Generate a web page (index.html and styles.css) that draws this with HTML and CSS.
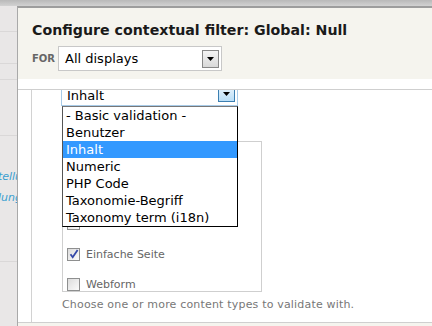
FILE: index.html
```html
<!DOCTYPE html>
<html lang="de">
<head>
    <meta charset="UTF-8">
    <title>Configure contextual filter</title>
    <link rel="stylesheet" href="styles.css">
</head>
<body>
    <div class="topbar"></div>
    <div class="layout">
        <!-- Seite hinter dem Overlay -->
        <aside class="backdrop">
            <div class="bg-row h24"></div>
            <div class="bg-row h32"></div>
            <div class="bg-row h16"></div>
            <div class="bg-row h56"></div>
            <div class="bg-spacer"></div>
            <div class="bg-link first"><span>Vorstellung</span></div>
            <div class="bg-link second"><span>Darstellung</span></div>
            <div class="bg-row h56 last"></div>
        </aside>

        <div class="modal">
            <div class="modal-header">
                <h1>Configure contextual filter: Global: Null</h1>
                <div class="for-row">
                    <span class="for-label">For</span>
                    <div class="select">
                        <span>All displays</span>
                        <span class="arrow"><svg width="7" height="4" viewBox="0 0 7 4"><path d="M0 0h7L3.5 4z" fill="#000"/></svg></span>
                    </div>
                </div>
            </div>
            <div class="modal-gap"></div>
            <div class="modal-body">
                <div class="gutter"></div>
                <div class="main">
                    <div class="select focused">
                        <span>Inhalt</span>
                        <span class="arrow"><svg width="7" height="4" viewBox="0 0 7 4"><path d="M0 0h7L3.5 4z" fill="#000"/></svg></span>
                    </div>

                    <div class="types">
                        <div class="check"><span class="box"></span></div>
                        <div class="check"><span class="box"></span></div>
                        <div class="check"><span class="box"></span><span class="hidden-label">Seite</span></div>
                        <label class="check"><span class="box checked"><svg width="10" height="10" viewBox="0 0 10 10"><path d="M1.5 5.2l2.2 3L8.6 1" fill="none" stroke="#3448a8" stroke-width="1.8"/></svg></span>Einfache Seite</label>
                        <label class="check"><span class="box"></span>Webform</label>
                    </div>
                    <p class="description">Choose one or more content types to validate with.</p>

                    <!-- geöffnete Auswahlliste -->
                    <ul class="options">
                        <li>- Basic validation -</li>
                        <li>Benutzer</li>
                        <li class="selected">Inhalt</li>
                        <li>Numeric</li>
                        <li>PHP Code</li>
                        <li>Taxonomie-Begriff</li>
                        <li>Taxonomy term (i18n)</li>
                    </ul>
                </div>
            </div>
            <div class="modal-footer"></div>
        </div>
    </div>
</body>
</html>
```

FILE: styles.css
```css
body {
    margin: 0;
    height: 326px;
    overflow: hidden;
    font-family: "DejaVu Sans", Verdana, sans-serif;
    background-color: #e8e6e6;
}
.topbar {
    height: 6px;
    background: linear-gradient(#b9b9b9, #d2d2d2);
}
.layout {
    display: flex;
    height: 320px;
}
.backdrop {
    width: 17px;
    flex-shrink: 0;
    background-color: #e9e7e7;
}
.bg-row {
    border-bottom: 1px solid #dad8d8;
}
.bg-row.h24 { height: 25px; }
.bg-row.h32 { height: 31px; }
.bg-row.h16 { height: 15px; }
.bg-row.h56 { height: 55px; }
.bg-row.last { height: 53px; }
.bg-spacer {
    height: 30px;
}
.bg-link {
    height: 21px;
    display: flex;
    justify-content: flex-end;
    align-items: center;
    overflow: hidden;
    font-size: 11px;
    font-style: italic;
    color: #3a9fd0;
}
.bg-link span {
    white-space: nowrap;
}
.bg-link.first span {
    margin-right: -19px;
}
.bg-link.second span {
    margin-right: -5px;
}
.modal {
    flex: 1;
    display: flex;
    flex-direction: column;
    border-top: 2px solid #9d9d9d;
    border-left: 1px solid #a9a9a9;
    background-color: #fff;
}
.modal-header {
    background-color: #f5f4ee;
    padding: 13px 0 0 14px;
    height: 58px;
}
.modal-header h1 {
    margin: 0;
    font-size: 14.2px;
    font-weight: bold;
    color: #1a1a1a;
    line-height: 18px;
}
.for-row {
    display: flex;
    align-items: center;
    margin-top: 7px;
}
.for-label {
    font-size: 10px;
    font-weight: bold;
    text-transform: uppercase;
    color: #666;
    width: 26px;
}
.select {
    display: flex;
    align-items: center;
    justify-content: space-between;
    box-sizing: border-box;
    width: 164px;
    height: 25px;
    padding: 0 2px 0 6px;
    background-color: #fff;
    border: 1px solid #c8c8c8;
    font-size: 13px;
    color: #000;
}
.arrow {
    display: flex;
    align-items: center;
    justify-content: center;
    box-sizing: border-box;
    width: 17px;
    height: 18px;
    border: 1px solid #888;
    background: linear-gradient(#f4f4f4, #d9d9d9);
}
.modal-gap {
    height: 10px;
}
.modal-body {
    display: flex;
    height: 232px;
    border-top: 1px solid #cfcfcf;
    border-bottom: 1px solid #cfcfcf;
    overflow: hidden;
}
.gutter {
    width: 13px;
    border-right: 1px solid #d2d2d2;
}
.main {
    position: relative;
    flex: 1;
    padding-left: 30px;
}
.main .select.focused {
    width: 177px;
    height: 22px;
    margin-top: -6px;
    margin-left: -1px;
    padding-left: 5px;
    border-color: #a8cbe8;
}
.focused .arrow {
    width: 17px;
    height: 16px;
    margin-top: -2px;
    border-color: #3c7fb1;
    background: linear-gradient(#e6f3fc, #b9def7);
}
.types {
    box-sizing: border-box;
    width: 200px;
    height: 151px;
    margin-top: 35px;
    padding: 14px 0 2px 4px;
    border: 1px solid #cfcfcf;
    display: flex;
    flex-direction: column;
    gap: 17.5px;
}
.check {
    display: flex;
    align-items: center;
    height: 13px;
    font-size: 11px;
    color: #666;
}
.hidden-label {
    font-size: 11px;
    color: #666;
}
.box {
    display: flex;
    align-items: center;
    justify-content: center;
    box-sizing: border-box;
    width: 13px;
    height: 13px;
    margin-right: 6px;
    border: 1px solid #8e8f8f;
    background: linear-gradient(135deg, #dcdcdc, #fbfbfb);
}
.description {
    margin: 6px 0 0;
    font-size: 11px;
    line-height: 14px;
    letter-spacing: 0.18px;
    color: #777;
}
.options {
    position: absolute;
    left: 30px;
    top: 16px;
    width: 176px;
    box-sizing: border-box;
    margin: 0;
    padding: 0;
    list-style: none;
    background-color: #fff;
    border: 1px solid #000;
    border-top-color: #777;
    border-left-color: #555;
}
.options li {
    height: 17px;
    line-height: 17px;
    padding-left: 3px;
    font-size: 13px;
    color: #000;
}
.options li.selected {
    background-color: #3399ff;
    color: #fff;
}
.modal-footer {
    flex: 1;
    background-color: #f5f4ee;
}
```
